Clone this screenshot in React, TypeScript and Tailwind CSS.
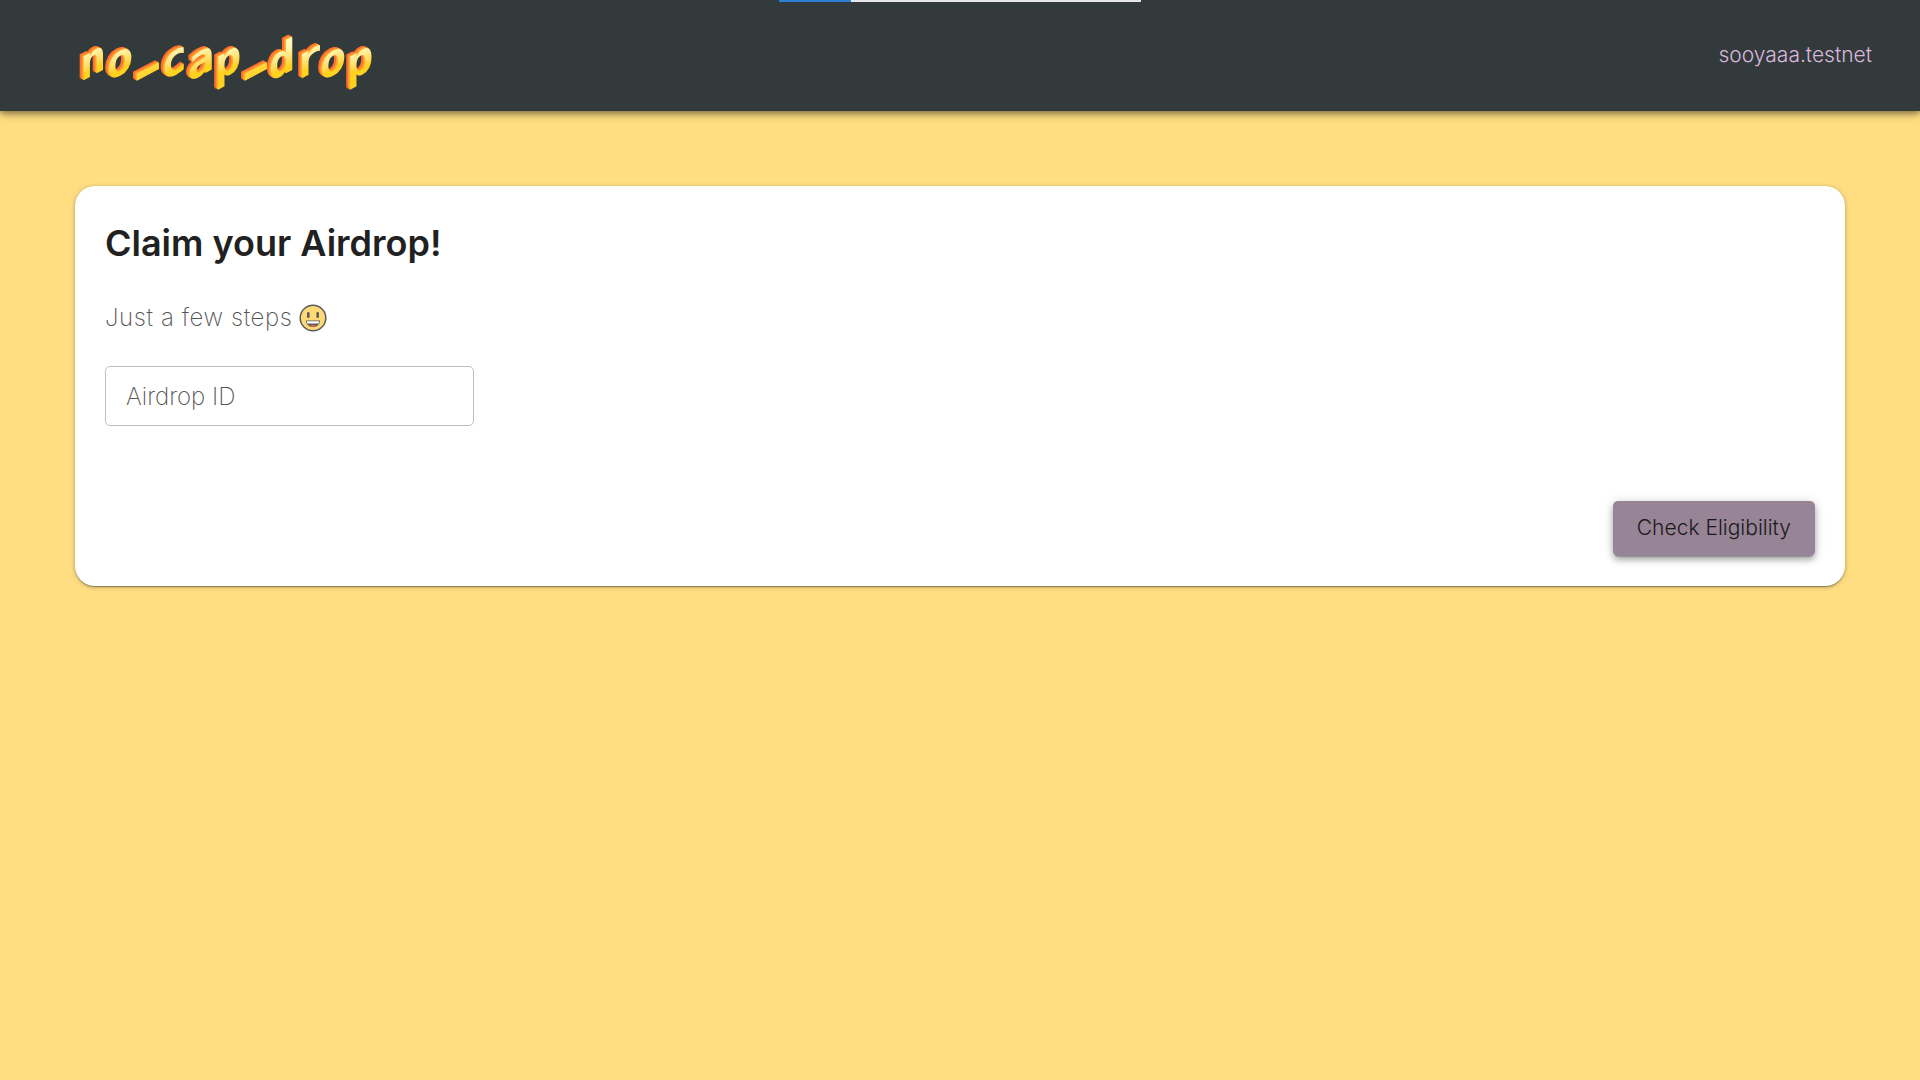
import { useState } from "react";

const LogoLetter: React.FC<{ char: string }> = ({ char }) => {
  if (char === "_") {
    return (
      <span className="inline-block w-[27px] -skew-y-[28deg] bg-linear-to-b from-[#fff08a] to-[#ffd21f] bg-clip-text pl-[5px] align-[9px] text-[30px] leading-[40px] text-transparent [-webkit-text-stroke:4px_transparent]">
        {char}
      </span>
    );
  }
  return (
    <span
      className={`inline-block -skew-y-[28deg] bg-linear-to-b from-[#fff8b8] from-30% to-[#ffd21f] to-65% bg-clip-text text-transparent ${
        char === "r" ? "w-[24px]" : "w-[27px]"
      }`}
    >
      {char}
    </span>
  );
};

const Logo: React.FC = () => {
  return (
    <a
      href="#"
      className="mt-2 block whitespace-nowrap font-['DejaVu_Sans_Mono',monospace] text-[44px] leading-[56px] font-bold [filter:drop-shadow(-1px_0px_0px_#ffb02c)_drop-shadow(-1px_-1px_0px_#ff9a2c)_drop-shadow(-2px_-1px_0px_#ff6f2c)]"
    >
      {"no_cap_drop".split("").map((char, i) => (
        <LogoLetter key={i} char={char} />
      ))}
    </a>
  );
};

const Smiley: React.FC = () => {
  return (
    <svg className="size-7" viewBox="0 0 28 28" role="img" aria-label="smile">
      <circle cx="14" cy="14" r="12.8" fill="#ffd976" stroke="#5c5c5c" strokeWidth="1.5" />
      <rect x="8" y="8" width="2.6" height="6" rx="1.2" fill="#5c5c5c" />
      <rect x="17.4" y="8" width="2.6" height="6" rx="1.2" fill="#5c5c5c" />
      <path d="M7 16.5h14c0 4-3 6.5-7 6.5s-7-2.5-7-6.5z" fill="#5c5c5c" />
      <path d="M8 17.200h12v1.600q0 .8-.8 .8H8.800q-.8 0-.8-.8z" fill="#fff" />
      <path d="M11 22c.5-1.500 5.500-1.500 6 0c-1.500 1-4.500 1-6 0z" fill="#f06449" />
    </svg>
  );
};

const Header: React.FC = () => {
  return (
    <header className="relative flex h-[111px] items-center justify-between bg-[#333a3c] pr-12 pl-20 shadow-[0_2px_4px_-1px_rgba(0,0,0,0.2),0_4px_5px_0_rgba(0,0,0,0.14),0_1px_10px_0_rgba(0,0,0,0.12),0_3px_10px_0_rgba(0,0,0,0.2)]">
      <div className="absolute top-0 left-1/2 h-[2px] w-[362px] -translate-x-1/2 bg-[#e6e6e6]">
        <div className="h-full w-1/5 bg-[#2a7fd4]" />
      </div>
      <Logo />
      <a href="#" className="pb-0.5 text-[21px] leading-8 font-light text-[#d9b8de]">
        sooyaaa.testnet
      </a>
    </header>
  );
};

const App: React.FC = () => {
  const [dropId, setDropId] = useState("");

  return (
    <div className="min-h-screen bg-[#ffde82] font-['Inter',sans-serif]">
      <Header />
      <main className="px-[75px] pt-[75px]">
        <section className="flex flex-col rounded-[20px] bg-white p-[30px] shadow-[0_2px_1px_-1px_rgba(0,0,0,0.2),0_1px_1px_0_rgba(0,0,0,0.14),0_1px_4px_0_rgba(0,0,0,0.3)]">
          <h1 className="text-[36px] leading-[54px] font-semibold text-[#212121]">Claim your Airdrop!</h1>
          <p className="mt-[30px] flex items-center gap-1.5 text-[24px] leading-9 font-extralight tracking-wide text-[#555555]">
            Just a few steps <Smiley />
          </p>
          <input
            type="text"
            aria-label="Airdrop ID"
            placeholder="Airdrop ID"
            value={dropId}
            onChange={(e) => setDropId(e.target.value)}
            className="mt-[30px] h-[60px] w-[369px] rounded-[5px] border border-[#c0c0c0] px-5 text-[24px] font-extralight text-[#212121] placeholder:text-[#555555]"
          />
          <button
            type="button"
            className="mt-[75px] h-[55px] self-end rounded-[5px] bg-[#978496] px-6 pb-0.5 text-[21px] font-light text-[#1a1a1a] shadow-[0_3px_1px_-2px_rgba(0,0,0,0.2),0_4px_6px_0_rgba(0,0,0,0.28),0_1px_12px_0_rgba(0,0,0,0.14)]"
          >
            Check Eligibility
          </button>
        </section>
      </main>
    </div>
  );
};

export default App;
